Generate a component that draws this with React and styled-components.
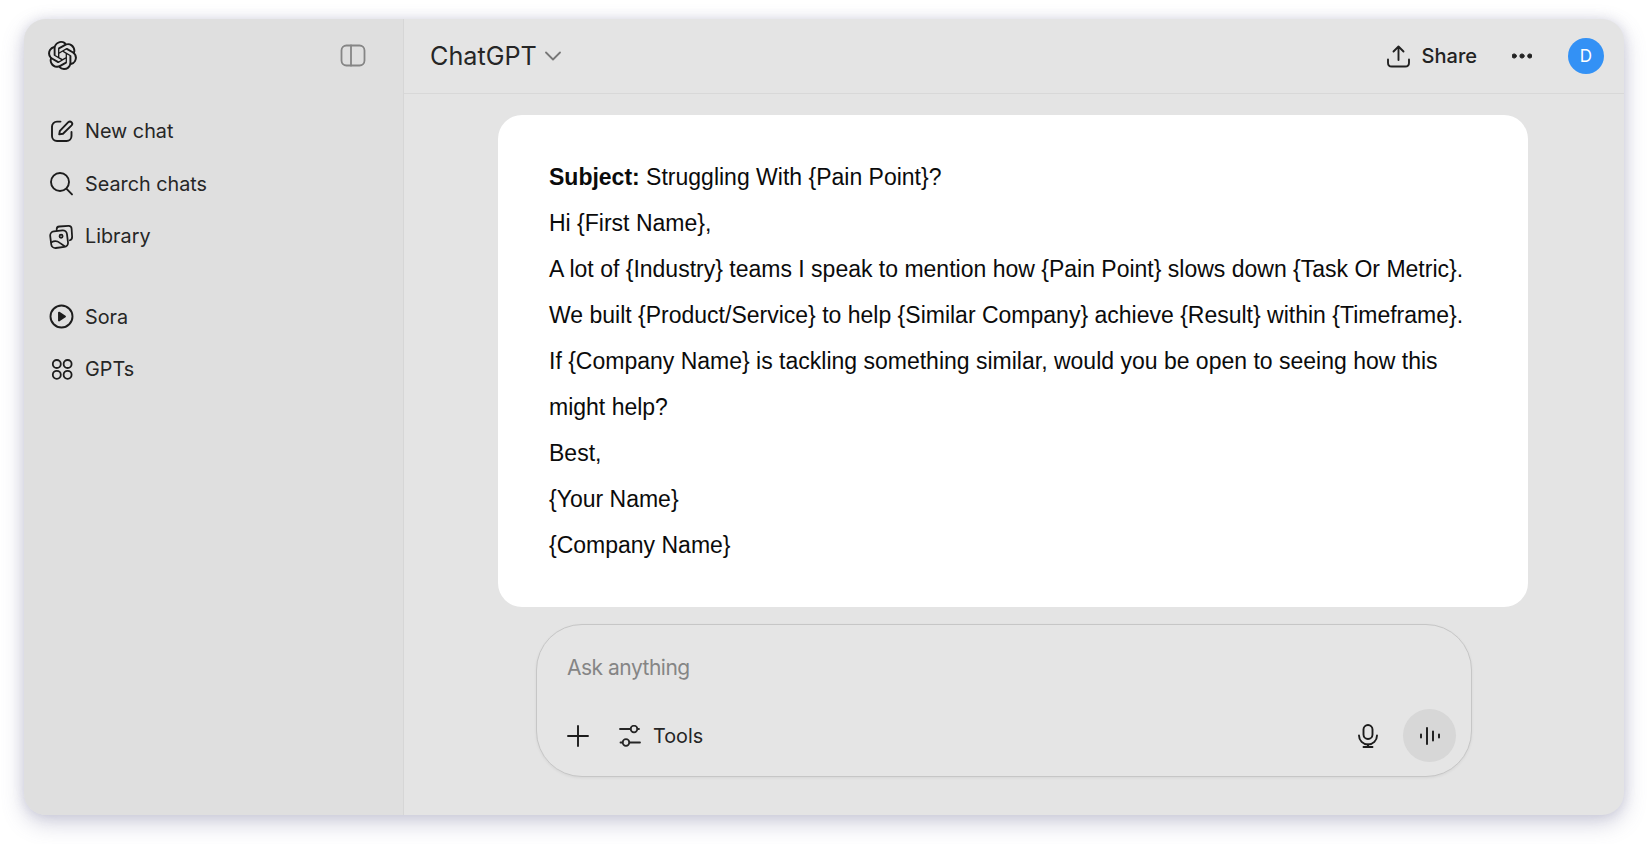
import React from 'react';
import styled, { createGlobalStyle } from 'styled-components';
import { SiOpenai } from 'react-icons/si';

const GlobalStyle = createGlobalStyle`
  html, body {
    margin: 0;
    padding: 0;
    background: #fff;
    height: 100%;
  }
  * { box-sizing: border-box; }
`;

const Page = styled.div`
  width: 1648px;
  height: 844px;
  padding: 19px 24px 29px 24px;
  overflow: hidden;
  font-family: Inter, "Liberation Sans", sans-serif;
`;

const Window = styled.div`
  display: flex;
  width: 1600px;
  height: 796px;
  border-radius: 22px;
  overflow: hidden;
  background: #e4e4e4;
  box-shadow: 0 8px 22px rgba(110, 110, 150, 0.32), 0 0 12px rgba(110, 110, 150, 0.18);
`;

const Sidebar = styled.aside`
  flex: 0 0 380px;
  background: #dfdfdf;
  border-right: 1px solid #d6d6d6;
  padding: 0 26px;
`;

const SidebarTop = styled.div`
  display: flex;
  align-items: center;
  justify-content: space-between;
  height: 72px;
  padding-right: 11px;
  margin-left: -2px;
  color: #1b1b1b;
`;

const NavGroup = styled.nav`
  display: flex;
  flex-direction: column;
  margin-top: ${props => props.$top}px;
`;

const NavItem = styled.div`
  display: flex;
  align-items: center;
  gap: 11px;
  height: 52.5px;
  margin-left: -1px;
  font-size: 19.8px;
  color: #262626;
`;

const NavIcon = styled.span`
  display: flex;
  align-items: center;
  justify-content: center;
  width: 25px;
  height: 25px;
  color: #1d1d1d;
`;

const Main = styled.main`
  flex: 1;
  display: flex;
  flex-direction: column;
  min-width: 0;
`;

const Header = styled.header`
  display: flex;
  align-items: center;
  justify-content: space-between;
  height: 75px;
  padding: 0 20px 0 26px;
  border-bottom: 1px solid #d8d8d8;
`;

const ModelPicker = styled.div`
  display: flex;
  align-items: center;
  gap: 8px;
  font-size: 25.2px;
  color: #262626;
`;

const HeaderActions = styled.div`
  display: flex;
  align-items: center;
`;

const ShareButton = styled.div`
  display: flex;
  align-items: center;
  gap: 12px;
  font-size: 20px;
  font-weight: 500;
  color: #222;
`;

const MoreButton = styled.div`
  display: flex;
  margin: 0 36px 0 35px;
  color: #222;
`;

const Avatar = styled.div`
  display: flex;
  align-items: center;
  justify-content: center;
  width: 36px;
  height: 36px;
  border-radius: 50%;
  background: #3391f5;
  color: #fff;
  font-size: 17px;
`;

const Content = styled.div`
  display: flex;
  flex-direction: column;
  align-items: flex-start;
  padding-top: 21px;
`;

const MessageCard = styled.section`
  width: 1030px;
  height: 492px;
  margin-left: 94px;
  padding: 39px 51px 0;
  background: #fff;
  border-radius: 24px;
  font-family: "Liberation Sans", Arial, sans-serif;
  font-size: 23px;
  line-height: 46px;
  color: #0b0b0b;
`;

const Line = styled.p`
  margin: 0;
`;

const Composer = styled.div`
  display: flex;
  flex-direction: column;
  width: 936px;
  height: 153px;
  margin: 17px 0 0 132px;
  padding: 0 15px 0 30px;
  border: 1px solid #c6c6c6;
  border-radius: 46px;
  background: #e5e5e5;
  box-shadow: 0 1px 3px rgba(0, 0, 0, 0.06);
`;

const Placeholder = styled.div`
  margin: 27px 0 0 0;
  height: 30px;
  line-height: 31px;
  font-size: 21px;
  letter-spacing: -0.5px;
  color: #858585;
`;

const ComposerRow = styled.div`
  display: flex;
  align-items: center;
  justify-content: space-between;
  margin-top: 27px;
`;

const ToolGroup = styled.div`
  display: flex;
  align-items: center;
  color: #1c1c1c;
`;

const ToolsButton = styled.div`
  display: flex;
  align-items: center;
  gap: 12px;
  margin-left: 30px;
  font-size: 19.8px;
  color: #262626;
`;

const VoiceButton = styled.div`
  display: flex;
  align-items: center;
  justify-content: center;
  width: 53px;
  height: 53px;
  margin-left: 25px;
  border-radius: 50%;
  background: #d7d7d7;
  color: #222;
`;

const Icon = styled.svg`
  display: block;
  flex: none;
  fill: none;
  stroke: currentColor;
  stroke-linecap: round;
  stroke-linejoin: round;
`;

const MutedIcon = styled(Icon)`
  color: ${props => props.$tone};
`;

const SidebarToggle = () => (
  <MutedIcon $tone="#858585" width="26" height="23" viewBox="0 0 26 23" strokeWidth="1.8">
    <rect x="1.5" y="1.5" width="23" height="20" rx="5" />
    <path d="M11 1.5v20" />
  </MutedIcon>
);

const NewChatIcon = () => (
  <Icon width="24" height="24" viewBox="0 0 24 24" strokeWidth="1.9">
    <path d="M10.5 2.6H7A5 5 0 0 0 2 7.6V17a5 5 0 0 0 5 5h9.5a5 5 0 0 0 5-5v-4" />
    <path d="M9.2 15.4l.7-3.6 8.4-8.6a2.3 2.3 0 0 1 3.3 3.2l-8.6 8.4z" />
  </Icon>
);

const SearchIcon = () => (
  <Icon width="25" height="25" viewBox="0 0 25 25" strokeWidth="1.9">
    <circle cx="11" cy="11" r="9" />
    <path d="M17.6 17.8 23 23.4" />
  </Icon>
);

const LibraryIcon = () => (
  <Icon width="25" height="25" viewBox="0 0 24 24" strokeWidth="1.7">
    <path d="M8 5.5 7.9 4.6C7.8 3 9 1.9 10.5 1.8l8.6-.6c1.7-.1 3 1.1 3.1 2.7l.5 7.7c.1 1.5-.8 2.9-2.2 3.4" transform="translate(-.5 .6)" />
    <rect x="1.6" y="6.6" width="16.2" height="16" rx="4" transform="rotate(-7 9.7 14.6)" />
    <circle cx="11.6" cy="11.8" r="1.5" />
    <path d="M2.4 17.5c3-1.6 5.6-1.2 8 .6l4.6 3.2" />
  </Icon>
);

const SoraIcon = () => (
  <Icon width="25" height="25" viewBox="0 0 25 25" strokeWidth="1.9">
    <circle cx="12.5" cy="12.5" r="11" />
    <path d="M10 8.6l6 3.9-6 3.9z" fill="currentColor" />
  </Icon>
);

const GptsIcon = () => (
  <Icon width="24" height="24" viewBox="0 0 24 24" strokeWidth="1.8">
    <circle cx="6.8" cy="7" r="4" />
    <circle cx="17.6" cy="7" r="4" />
    <circle cx="6.8" cy="17.8" r="4" />
    <circle cx="17.6" cy="17.8" r="4" />
  </Icon>
);

const ChevronIcon = () => (
  <MutedIcon $tone="#777" width="16" height="10" viewBox="0 0 16 10" strokeWidth="1.8">
    <path d="M1 1.5l7 7 7-7" />
  </MutedIcon>
);

const ShareIcon = () => (
  <Icon width="23" height="23" viewBox="0 0 23 23" strokeWidth="1.9">
    <path d="M11.5 15V1.5M6.5 6.5l5-5 5 5" />
    <path d="M1 14.5v3.2C1 20 2.4 21.5 4.8 21.5h13.4c2.4 0 3.8-1.5 3.8-3.8v-3.2" />
  </Icon>
);

const MoreIcon = () => (
  <Icon width="20" height="6" viewBox="0 0 20 6" stroke="none">
    <circle cx="2.2" cy="3" r="2.1" fill="currentColor" />
    <circle cx="10" cy="3" r="2.1" fill="currentColor" />
    <circle cx="17.8" cy="3" r="2.1" fill="currentColor" />
  </Icon>
);

const PlusIcon = () => (
  <Icon width="22" height="22" viewBox="0 0 22 22" strokeWidth="1.9">
    <path d="M11 1v20M1 11h20" />
  </Icon>
);

const ToolsIcon = () => (
  <Icon width="22" height="22" viewBox="0 0 22 22" strokeWidth="1.8">
    <path d="M1 4h10.5M18.5 4H20" />
    <circle cx="15" cy="4" r="3.3" />
    <path d="M1.5 17.5h2M10.5 17.5H21" />
    <circle cx="7" cy="17.5" r="3.3" />
  </Icon>
);

const MicIcon = () => (
  <Icon width="20" height="24" viewBox="0 0 20 24" strokeWidth="1.9">
    <rect x="5.5" y="1" width="9" height="14" rx="4.5" />
    <path d="M1 11.5a9 9 0 0 0 18 0" />
    <path d="M10 20.5V23M5.5 23h9" />
  </Icon>
);

const WaveIcon = () => (
  <Icon width="22" height="20" viewBox="0 0 22 20" strokeWidth="2">
    <path d="M2 8.5v3M8 2v16M14 5.5v9M20 8.5v3" />
  </Icon>
);

const topItems = [
  { label: 'New chat', icon: <NewChatIcon /> },
  { label: 'Search chats', icon: <SearchIcon /> },
  { label: 'Library', icon: <LibraryIcon /> },
];

const bottomItems = [
  { label: 'Sora', icon: <SoraIcon /> },
  { label: 'GPTs', icon: <GptsIcon /> },
];

const lines = [
  <><b>Subject:</b> Struggling With {'{Pain Point}'}?</>,
  'Hi {First Name},',
  'A lot of {Industry} teams I speak to mention how {Pain Point} slows down {Task Or Metric}.',
  'We built {Product/Service} to help {Similar Company} achieve {Result} within {Timeframe}.',
  'If {Company Name} is tackling something similar, would you be open to seeing how this might help?',
  'Best,',
  '{Your Name}',
  '{Company Name}',
];

export default function App() {
  return (
    <>
      <GlobalStyle />
      <Page>
        <Window>
          <Sidebar>
            <SidebarTop>
              <SiOpenai size={29} />
              <SidebarToggle />
            </SidebarTop>
            <NavGroup $top={14}>
              {topItems.map(item => (
                <NavItem key={item.label}>
                  <NavIcon>{item.icon}</NavIcon>
                  {item.label}
                </NavItem>
              ))}
            </NavGroup>
            <NavGroup $top={28}>
              {bottomItems.map(item => (
                <NavItem key={item.label}>
                  <NavIcon>{item.icon}</NavIcon>
                  {item.label}
                </NavItem>
              ))}
            </NavGroup>
          </Sidebar>
          <Main>
            <Header>
              <ModelPicker>
                ChatGPT
                <ChevronIcon />
              </ModelPicker>
              <HeaderActions>
                <ShareButton>
                  <ShareIcon />
                  Share
                </ShareButton>
                <MoreButton>
                  <MoreIcon />
                </MoreButton>
                <Avatar>D</Avatar>
              </HeaderActions>
            </Header>
            <Content>
              <MessageCard>
                {lines.map((line, index) => (
                  <Line key={index}>{line}</Line>
                ))}
              </MessageCard>
              <Composer>
                <Placeholder>Ask anything</Placeholder>
                <ComposerRow>
                  <ToolGroup>
                    <PlusIcon />
                    <ToolsButton>
                      <ToolsIcon />
                      Tools
                    </ToolsButton>
                  </ToolGroup>
                  <ToolGroup>
                    <MicIcon />
                    <VoiceButton>
                      <WaveIcon />
                    </VoiceButton>
                  </ToolGroup>
                </ComposerRow>
              </Composer>
            </Content>
          </Main>
        </Window>
      </Page>
    </>
  );
}
